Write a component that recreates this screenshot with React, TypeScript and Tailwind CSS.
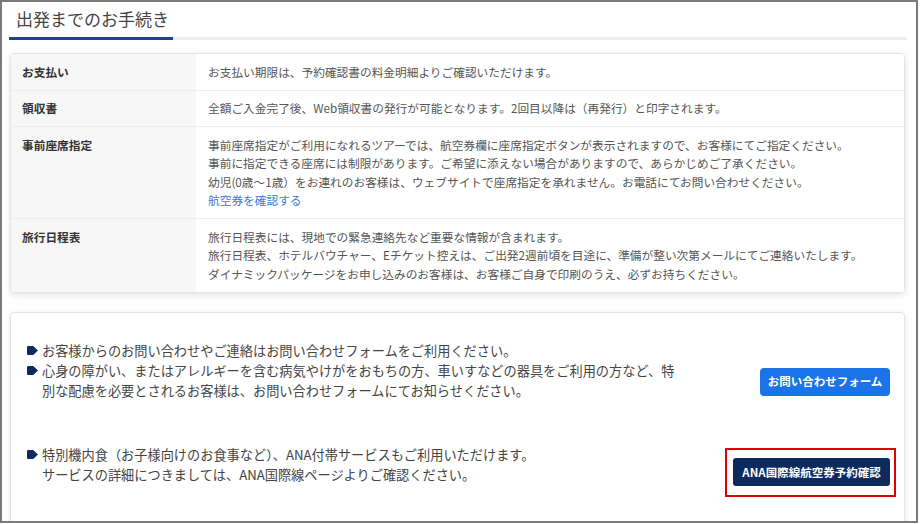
import React from 'react'

const font = { fontFamily: '"Noto Sans CJK JP", "Noto Sans", sans-serif' }

const rows: { label: string; lines: string[]; link?: string }[] = [
  { label: 'お支払い', lines: ['お支払い期限は、予約確認書の料金明細よりご確認いただけます。'] },
  {
    label: '領収書',
    lines: ['全額ご入金完了後、Web領収書の発行が可能となります。2回目以降は（再発行）と印字されます。'],
  },
  {
    label: '事前座席指定',
    lines: [
      '事前座席指定がご利用になれるツアーでは、航空券欄に座席指定ボタンが表示されますので、お客様にてご指定ください。',
      '事前に指定できる座席には制限があります。ご希望に添えない場合がありますので、あらかじめご了承ください。',
      '幼児(0歳～1歳）をお連れのお客様は、ウェブサイトで座席指定を承れません。お電話にてお問い合わせください。',
    ],
    link: '航空券を確認する',
  },
  {
    label: '旅行日程表',
    lines: [
      '旅行日程表には、現地での緊急連絡先など重要な情報が含まれます。',
      '旅行日程表、ホテルバウチャー、Eチケット控えは、ご出発2週前頃を目途に、準備が整い次第メールにてご連絡いたします。',
      'ダイナミックパッケージをお申し込みのお客様は、お客様ご自身で印刷のうえ、必ずお持ちください。',
    ],
  },
]

function Bullet() {
  return (
    <span className="flex h-[20px] w-[11px] shrink-0 items-center">
      <svg width="11" height="9" viewBox="0 0 11 9">
        <path d="M1.2 0H6.2L11 4.5 6.2 9H1.2Q0 9 0 7.8V1.2Q0 0 1.2 0Z" fill="#0c2a5b" />
      </svg>
    </span>
  )
}

function Item({ text, bullet = true }: { text: string; bullet?: boolean }) {
  return (
    <div className="flex gap-[4px]">
      {bullet ? <Bullet /> : <span className="w-[11px] shrink-0" />}
      <p className="w-[640px] text-[13.2px] leading-[20px] text-[#444]">{text}</p>
    </div>
  )
}

export default function App() {
  return (
    <div className="h-[524px] w-[920px] bg-white" style={font}>
      <div className="h-[523px] w-[918px] overflow-hidden border-2 border-[#7a7a7a] px-[7px] pt-[4px]">
        {/* heading */}
        <div className="w-[898px]">
          <h2 className="pl-[7px] text-[17px] leading-[26px] font-normal text-[#444]">出発までのお手続き</h2>
          <div className="mt-[5px] flex h-[3px]">
            <div className="w-[164px] bg-[#1d4487]" />
            <div className="flex-1 bg-[#ededed]" />
          </div>
        </div>

        {/* procedures table */}
        <div className="mt-[13px] ml-[1px] w-[895px] overflow-hidden rounded-[4px] border border-[#e4e4e4] shadow-[0_2px_6px_rgba(0,0,0,0.12)]">
          {rows.map((r, i) => (
            <div key={r.label} className={`flex ${i > 0 ? 'border-t border-[#ececec]' : ''}`}>
              <div className="w-[185px] shrink-0 bg-[#f7f7f7] py-[8.5px] pl-[11px] text-[11.7px] leading-[18.5px] font-bold text-[#333]">
                {r.label}
              </div>
              <div className="flex-1 bg-white py-[8.5px] pl-[12px] text-[11.7px] leading-[18.5px] text-[#555]">
                {r.lines.map((l) => (
                  <p key={l}>{l}</p>
                ))}
                {r.link && <a className="text-[#3a7bd5]">{r.link}</a>}
              </div>
            </div>
          ))}
        </div>

        {/* contact */}
        <div className="mt-[19px] ml-[1px] h-[260px] w-[895px] rounded-[4px] border border-[#e4e4e4] pt-[28px] pr-[8px] pl-[16px] shadow-[0_2px_6px_rgba(0,0,0,0.1)]">
          <div className="flex items-start justify-between">
            <div>
              <Item text="お客様からのお問い合わせやご連絡はお問い合わせフォームをご利用ください。" />
              <Item text="心身の障がい、またはアレルギーを含む病気やけがをおもちの方、車いすなどの器具をご利用の方など、特別な配慮を必要とされるお客様は、お問い合わせフォームにてお知らせください。" />
            </div>
            <button
              type="button"
              className="mt-[27px] mr-[6px] h-[28px] w-[130px] rounded-[4px] bg-[#1a73e8] text-[11.5px] font-bold text-white"
            >
              お問い合わせフォーム
            </button>
          </div>

          <div className="mt-[44px] flex items-start justify-between">
            <div>
              <Item text="特別機内食（お子様向けのお食事など）、ANA付帯サービスもご利用いただけます。" />
              <Item bullet={false} text="サービスの詳細につきましては、ANA国際線ページよりご確認ください。" />
            </div>
            <div className="mt-[3px] border-2 border-[#e00000] pt-[8px] pr-[4px] pb-[9px] pl-[6px]">
              <button
                type="button"
                className="h-[28px] w-[157px] rounded-[3px] bg-[#0c2a5b] text-[11.5px] font-bold text-white"
              >
                ANA国際線航空券予約確認
              </button>
            </div>
          </div>
        </div>
      </div>
    </div>
  )
}
